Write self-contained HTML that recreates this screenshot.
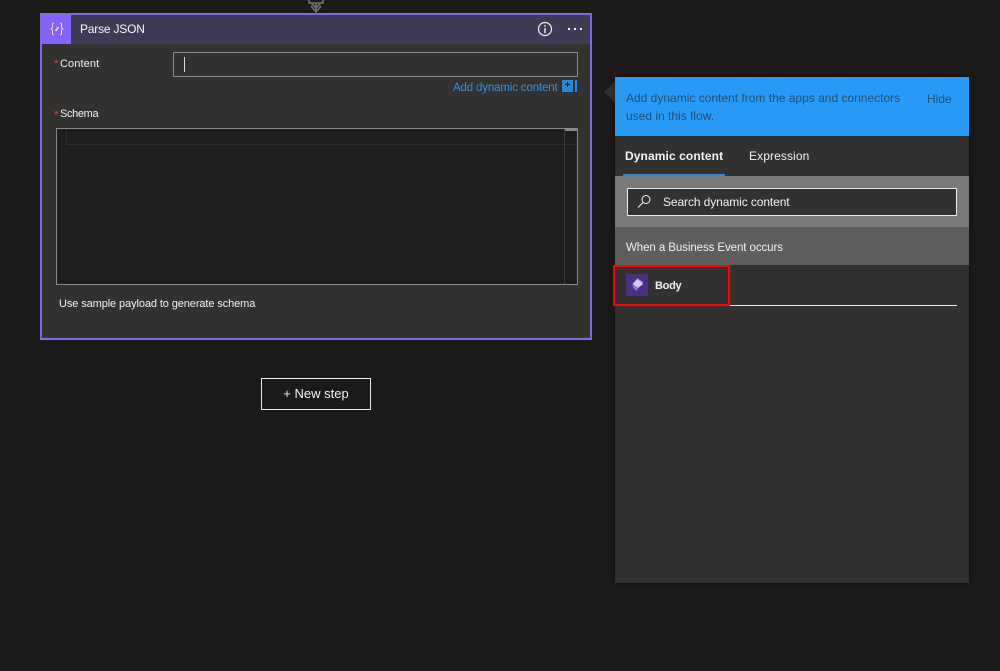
<!DOCTYPE html>
<html>
<head>
<meta charset="utf-8">
<style>
html,body{margin:0;padding:0;}
body{width:1000px;height:671px;background:#1b1a19;position:relative;overflow:hidden;font-family:"Liberation Sans",sans-serif;font-size:12px;color:#f3f2f1;}
div,span{position:absolute;box-sizing:border-box;white-space:nowrap;}
svg{position:absolute;}
</style>
</head>
<body>
<svg style="left:306px;top:0" width="20" height="13" viewBox="0 0 20 13" fill="none" stroke="#6f6e6c" stroke-width="1.6"><path d="M2 0L10 8L18 0M2 3H18M10 3V12M5 6L10 12L15 6"/></svg>

<div style="left:40px;top:13px;width:552px;height:327px;background:#323130;border:2px solid #7f68e4;"></div>
<div style="left:42px;top:15px;width:548px;height:29px;background:#403b54;"></div>
<div style="left:42px;top:15px;width:29px;height:29px;background:#8661f5;"></div>
<svg style="left:48px;top:20px" width="18" height="18" viewBox="0 0 18 18" fill="none" stroke="#e6defc" stroke-width="1"><path d="M6 3C4 3 4.5 5 4.5 7C4.5 8.3 3.5 9 2.5 9C3.5 9 4.5 9.7 4.5 11C4.5 13 4 15 6 15M12 3C14 3 13.5 5 13.5 7C13.5 8.3 14.5 9 15.5 9C14.5 9 13.5 9.7 13.5 11C13.5 13 14 15 12 15"/><path d="M7.5 11L10.5 7" stroke-width="1.8"/></svg>
<div style="left:80px;top:22px;font-size:12px;line-height:15px;letter-spacing:-.2px;color:#f5f5f5;">Parse JSON</div>
<svg style="left:537px;top:21px" width="16" height="16" viewBox="0 0 16 16" fill="none" stroke="#f3f2f1"><circle cx="8" cy="8" r="6.5" stroke-width="1.2"/><path d="M8 7V12M8 4V5.6" stroke-width="1.4"/></svg>
<svg style="left:568px;top:26px" width="14" height="6" viewBox="0 0 14 6" fill="#f3f2f1"><rect x="0" y="2" width="2" height="2"/><rect x="6" y="2" width="2" height="2"/><rect x="12" y="2" width="2" height="2"/></svg>

<div style="left:54px;top:58px;font-size:11px;line-height:12px;color:#e0443e;">*</div>
<div style="left:60px;top:57px;font-size:11px;line-height:14px;letter-spacing:.1px;">Content</div>
<div style="left:173px;top:52px;width:405px;height:25px;border:1px solid #8a8886;background:#323130;"></div>
<div style="left:184px;top:57px;width:1px;height:15px;background:#d8d8d8;"></div>
<div style="left:453px;top:81px;font-size:11.5px;line-height:14px;letter-spacing:-.15px;color:#2f8fe6;">Add dynamic content</div>
<div style="left:562px;top:80px;width:11px;height:12px;background:#2b88d8;color:#1b1a19;font-size:10px;line-height:11px;text-align:center;font-weight:bold;">+</div>
<div style="left:575px;top:80px;width:2px;height:12px;background:#2b88d8;"></div>

<div style="left:54px;top:109px;font-size:11px;line-height:12px;color:#e0443e;">*</div>
<div style="left:60px;top:107px;font-size:11px;line-height:14px;letter-spacing:-.35px;">Schema</div>
<div style="left:56px;top:128px;width:522px;height:157px;background:#1e1e1e;border:1px solid #8a8886;"></div>
<div style="left:66px;top:129px;width:1px;height:15px;background:#2c2c2c;"></div>
<div style="left:66px;top:144px;width:511px;height:1px;background:#2c2c2c;"></div>
<div style="left:564px;top:129px;width:1px;height:155px;background:#3a3a3a;"></div>
<div style="left:565px;top:129px;width:12px;height:2px;background:#8a8886;"></div>
<div style="left:59px;top:297px;font-size:11px;line-height:14px;letter-spacing:-.1px;">Use sample payload to generate schema</div>

<div style="left:261px;top:378px;width:110px;height:32px;border:1px solid #edebe9;background:#1b1a19;"></div>
<div style="left:261px;top:386px;width:110px;text-align:center;font-size:13px;line-height:15px;">+ New step</div>

<svg style="left:604px;top:81px" width="11" height="22" viewBox="0 0 11 22"><path d="M11 0L0 11L11 22Z" fill="#323130"/></svg>
<div style="left:615px;top:77px;width:354px;height:506px;background:#323130;box-shadow:0 0 6px rgba(0,0,0,.5);"></div>
<div style="left:615px;top:77px;width:354px;height:59px;background:#2899f5;"></div>
<div style="left:626px;top:89px;font-size:12px;line-height:18px;color:#214f78;white-space:normal;width:285px;">Add dynamic content from the apps and connectors used in this flow.</div>
<div style="left:927px;top:92px;font-size:12px;line-height:14px;color:#214f78;">Hide</div>
<div style="left:625px;top:149px;font-size:12px;line-height:15px;font-weight:bold;letter-spacing:.1px;">Dynamic content</div>
<div style="left:749px;top:149px;font-size:12px;line-height:15px;letter-spacing:.1px;">Expression</div>
<div style="left:623px;top:174px;width:102px;height:2px;background:#2b88d8;"></div>
<div style="left:615px;top:176px;width:354px;height:51px;background:#7a7977;"></div>
<div style="left:627px;top:188px;width:330px;height:28px;background:#323130;border:1px solid #edebe9;border-radius:1px;"></div>
<svg style="left:636px;top:193px" width="17" height="17" viewBox="0 0 17 17" fill="none" stroke="#f3f2f1" stroke-width="1"><circle cx="10" cy="6.5" r="4"/><path d="M7 9.5L2 14.5"/></svg>
<div style="left:663px;top:195px;font-size:12px;line-height:14px;letter-spacing:-.1px;">Search dynamic content</div>
<div style="left:615px;top:227px;width:354px;height:38px;background:#605e5c;"></div>
<div style="left:626px;top:241px;font-size:11.5px;line-height:14px;letter-spacing:-.08px;">When a Business Event occurs</div>

<div style="left:730px;top:305px;width:227px;height:1px;background:#edebe9;"></div>
<div style="left:613px;top:265px;width:117px;height:41px;border:2px solid #ff0000;"></div>
<div style="left:626px;top:274px;width:22px;height:22px;background:#4a2f7f;"></div>
<svg style="left:628px;top:276px" width="18" height="18" viewBox="0 0 18 18"><path d="M9 2L15 6L14 9L9 6Z" fill="#a98ae6"/><path d="M9 3L15 8L10 12L4.5 8Z" fill="#d9c9f5"/><path d="M4.5 8L10 12L9 15L5 12Z" fill="#8f6fd6"/></svg>
<div style="left:655px;top:279px;font-size:11px;line-height:14px;font-weight:bold;letter-spacing:-.3px;">Body</div>
</body>
</html>
